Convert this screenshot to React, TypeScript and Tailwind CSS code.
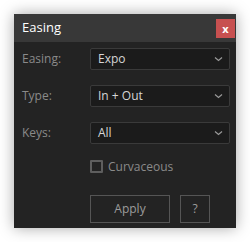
import React from 'react';

type SelectRowProps = { label: string; value: string };

function SelectRow({ label, value }: SelectRowProps) {
  return (
    <div className="flex items-center">
      <span className="w-[76px] pl-2 text-[12px] text-[#8a8a8a]">{label}</span>
      <div className="flex h-[22px] flex-1 items-center justify-between rounded-[2px] border border-[#3a3a3a] bg-[#1b1b1b] pl-[7px] pr-[6px]">
        <span className="text-[12px] text-[#d6d6d6]">{value}</span>
        <svg width="9" height="6" viewBox="0 0 9 6" fill="none">
          <path d="M1 1.5l3.5 3 3.5-3" stroke="#9a9a9a" strokeWidth="1.2" />
        </svg>
      </div>
    </div>
  );
}

export default function App() {
  return (
    <div className="h-[242px] w-[250px] bg-white p-[14px] font-['Open_Sans',sans-serif]">
      <div className="flex h-[214px] w-[222px] flex-col bg-[#232323] shadow-[0_0_14px_rgba(0,0,0,0.35)]">
        <div className="flex h-[28px] items-center justify-between bg-[#383838] pl-2 pr-[1px]">
          <span className="text-[13px] text-white">Easing</span>
          <button className="flex h-[19px] w-[19px] items-center justify-center bg-[#c75050] text-[11px] font-bold leading-none text-white">
            x
          </button>
        </div>
        <div className="flex flex-1 flex-col pt-[6px] pr-[6px]">
          <div className="flex flex-col gap-[15px]">
            <SelectRow label="Easing:" value="Expo" />
            <SelectRow label="Type:" value="In + Out" />
            <SelectRow label="Keys:" value="All" />
          </div>
          <div className="mt-[16px] flex items-center pl-[76px]">
            <span className="h-[13px] w-[13px] rounded-[1px] border-2 border-[#5e5e5e]" />
            <span className="ml-[5px] text-[12px] leading-[13px] text-[#8a8a8a]">Curvaceous</span>
          </div>
          <div className="mt-[22px] flex gap-[10px] pl-[76px]">
            <button className="h-[28px] w-[80px] border border-[#555] text-[12px] text-[#9c9c9c]">
              Apply
            </button>
            <button className="h-[28px] w-[30px] border border-[#555] text-[12px] text-[#9c9c9c]">
              ?
            </button>
          </div>
        </div>
      </div>
    </div>
  );
}
